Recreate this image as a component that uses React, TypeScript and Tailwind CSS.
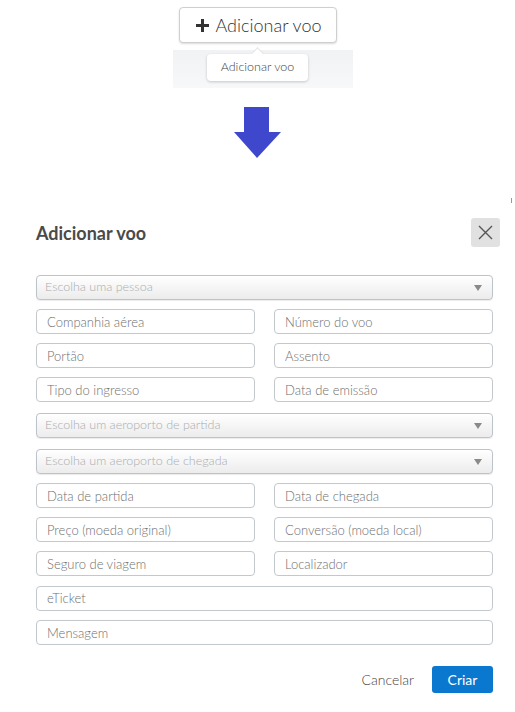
import React from 'react';

const font = { fontFamily: 'Lato, "Open Sans", sans-serif' };

// plain text input with placeholder look
const Field = ({ label, full }: { label: string; full?: boolean }) => (
    <input
        placeholder={label}
        className={`h-[25px] ${full ? 'w-full' : 'w-[219px]'} rounded-[4px] border border-[#c3c8cd] bg-white px-[10px] text-[13px] font-light text-[#333] placeholder:text-[#6f6f6f] outline-none`}
    />
);

// fake select box with gradient
const SelectBox = ({ label }: { label: string }) => (
    <div className="flex h-[25px] w-full items-center justify-between rounded-[4px] border border-[#bcc3ca] bg-gradient-to-b from-white to-[#ececec] pl-[8px] pr-[10px] shadow-[0_1px_1px_rgba(0,0,0,0.08)]">
        <span className="text-[12.5px] font-light text-[#a9adb1]">{label}</span>
        <svg width="8" height="6" viewBox="0 0 8 6">
            <path d="M0 0h8L4 6z" fill="#8a8a8a" />
        </svg>
    </div>
);

const Row = ({ a, b, mt }: { a: string; b: string; mt: string }) => (
    <div className={`flex justify-between ${mt}`}>
        <Field label={a} />
        <Field label={b} />
    </div>
);

const App = () => {
    return (
        <div className="relative h-[712px] w-[515px] overflow-hidden bg-white" style={font}>
            {/* top preview */}
            <div className="relative h-[92px]">
                <div className="absolute left-[173px] top-[50px] h-[38px] w-[180px] bg-gradient-to-b from-[#f1f2f4] to-[#f7f8f9]" />
                <button className="absolute left-[179px] top-[7px] flex h-[36px] w-[158px] items-center justify-center gap-[6px] rounded-[4px] border border-[#cfcfcf] bg-white text-[18px] font-light text-[#333] shadow-[0_1px_2px_rgba(0,0,0,0.15)]">
                    <svg width="15" height="15" viewBox="0 0 15 15">
                        <path d="M7.5 1v13M1 7.5h13" stroke="#333" strokeWidth="3" />
                    </svg>
                    Adicionar voo
                </button>
                <div className="absolute left-[207px] top-[54px] flex h-[27px] w-[101px] items-center justify-center rounded-[4px] bg-white text-[12.5px] font-light text-[#444] shadow-[0_1px_3px_rgba(0,0,0,0.2)]">
                    Adicionar voo
                    <span className="absolute left-[46px] top-[-5px] h-[9px] w-[9px] rotate-45 border-l border-t border-[#e2e2e2] bg-white" />
                </div>
            </div>

            {/* arrow */}
            <div className="flex justify-center pl-[1px] pt-[15px]">
                <svg width="48" height="52" viewBox="0 0 48 52">
                    <path d="M10 0h25v25h12L23 51 0 25h10z" fill="#3f48cc" />
                </svg>
            </div>

            <span className="absolute left-[511px] top-[198px] h-[5px] w-[1px] bg-[#999]" />

            {/* modal */}
            <div className="ml-[36px] mr-[22px] mt-[59px]">
                <div className="-mr-[7px] flex items-center justify-between">
                    <h2 className="pt-[2px] text-[18px] font-bold text-[#4a4a4a]">Adicionar voo</h2>
                    <button className="flex h-[29px] w-[29px] items-center justify-center rounded-[3px] bg-[#e1e1e1]">
                        <svg width="15" height="15" viewBox="0 0 15 15">
                            <path d="M1 1l13 13M14 1L1 14" stroke="#555" strokeWidth="1.4" />
                        </svg>
                    </button>
                </div>

                <div className="mt-[28px]">
                    <SelectBox label="Escolha uma pessoa" />
                </div>
                <Row a="Companhia aérea" b="Número do voo" mt="mt-[9px]" />
                <Row a="Portão" b="Assento" mt="mt-[9px]" />
                <Row a="Tipo do ingresso" b="Data de emissão" mt="mt-[9px]" />
                <div className="mt-[11px]">
                    <SelectBox label="Escolha um aeroporto de partida" />
                </div>
                <div className="mt-[11px]">
                    <SelectBox label="Escolha um aeroporto de chegada" />
                </div>
                <Row a="Data de partida" b="Data de chegada" mt="mt-[9px]" />
                <Row a="Preço (moeda original)" b="Conversão (moeda local)" mt="mt-[9px]" />
                <Row a="Seguro de viagem" b="Localizador" mt="mt-[9px]" />
                <div className="mt-[9px]">
                    <Field label="eTicket" full />
                </div>
                <div className="mt-[9px]">
                    <Field label="Mensagem" full />
                </div>

                <div className="mt-[21px] flex items-center justify-end gap-[18px]">
                    <button className="text-[14px] font-light text-[#444]">Cancelar</button>
                    <button className="h-[27px] w-[61px] rounded-[3px] bg-[#0b78cf] text-[14px] text-white">Criar</button>
                </div>
            </div>
        </div>
    );
};

export default App;
